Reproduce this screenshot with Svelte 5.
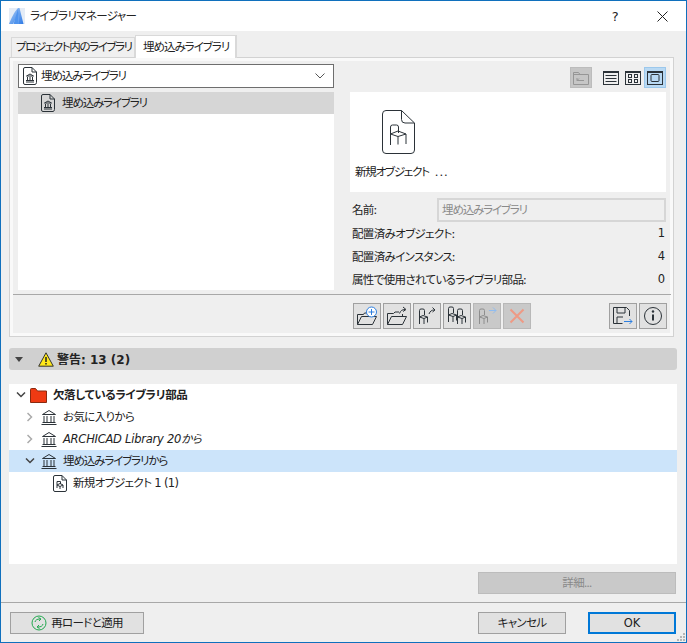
<script>
  const rows = [
    { label: '配置済みオブジェクト:', value: 1 },
    { label: '配置済みインスタンス:', value: 4 },
    { label: '属性で使用されているライブラリ部品:', value: 0 }
  ];
</script>

{#snippet bank(size = 16)}
  <svg width={size} height={size} viewBox="0 0 16 16" fill="none" stroke="#2b3238" stroke-width="1">
    <path d="M1.500 5.500 8 1.500l6.500 4zM3 7v6M6 7v6M10 7v6M13 7v6M1.500 13.500h13M0.500 15.500h15"/>
  </svg>
{/snippet}

{#snippet docBank()}
  <svg width="14" height="18" viewBox="0 0 14 18" fill="none" stroke="#2b3238" stroke-width="1">
    <path d="M2 .5h7l4.500 4.500v10.500a2 2 0 0 1-1.500 2H2a1.500 1.500 0 0 1-1.500-1.500V2A1.500 1.500 0 0 1 2 .5zM9 .5V5h4.500"/>
    <path d="M3.500 9 7 7l3.500 2zM4.500 10v3M7 10v3M9.500 10v3M3 13.500h8M3 15h8"/>
  </svg>
{/snippet}

{#snippet chair(stroke = '#2b3238', op = 1)}
  <g fill="none" stroke={stroke} stroke-width="1" opacity={op}>
    <path d="M2.500 9V2.500a1.500 1.500 0 0 1 1.500-1.500h2a1.500 1.500 0 0 1 1.500 1.500V7"/>
    <path d="M2.500 9 6 7.500 10.500 9 7 10.500zM2.500 9v7M7 10.500V16M10.500 9v5.500"/>
  </g>
{/snippet}

<div class="win">
  <header class="title">
    <svg class="logo" width="16" height="16" viewBox="0 0 16 16">
      <defs>
        <linearGradient id="lg" x1="0" x2="1" y1="0" y2="1">
          <stop offset="0" stop-color="#a9cdf7"/>
          <stop offset="1" stop-color="#2f7be6"/>
        </linearGradient>
      </defs>
      <rect width="16" height="16" fill="#e4ecf6"/>
      <path d="M0 16C2 11 5 4 9 0h1.500L14.500 16H10L9 6 4 16z" fill="url(#lg)"/>
      <path d="M9 1 4.500 16H10z" fill="#4f94ee"/>
    </svg>
    <span class="title-text">ライブラリマネージャー</span>
    <span class="help">?</span>
    <svg class="close" width="11" height="11" viewBox="0 0 11 11" stroke="#222" fill="none"><path d="M.5.5l10 10M10.500.5l-10 10"/></svg>
  </header>

  <nav class="tabs">
    <div class="tab">プロジェクト内のライブラリ</div>
    <div class="tab active">埋め込みライブラリ</div>
  </nav>

  <section class="panel">
    <div class="upper">
      <div class="left">
        <div class="select">
          {@render docBank()}
          <span class="select-text">埋め込みライブラリ</span>
          <svg class="caret" width="10" height="6" viewBox="0 0 10 6" fill="none" stroke="#555"><path d="M.5.500 5 5 9.500.500"/></svg>
        </div>
        <div class="list">
          <div class="list-row">
            {@render docBank()}
            <span>埋め込みライブラリ</span>
          </div>
        </div>
      </div>

      <div class="right">
        <div class="views">
          <span class="view up">
            <svg width="16" height="14" viewBox="0 0 16 14" fill="none" stroke="#969696">
              <path d="M.5 13.500V1.500h5l1.500 2h8.500v10zM.5 3.500H7M4 9.500h7M4 9.500 6 7.500M4 7v2.500"/>
            </svg>
          </span>
          <svg class="v-list" width="16" height="14" viewBox="0 0 16 14" fill="none" stroke="#2b3238">
            <rect x=".5" y=".5" width="15" height="13"/><path d="M.5 1.500h15" /><path d="M2.500 4.500h11M2.500 7.500h11M2.500 10.500h11"/>
          </svg>
          <svg class="v-grid" width="16" height="14" viewBox="0 0 16 14" fill="none" stroke="#2b3238">
            <rect x=".5" y=".5" width="15" height="13"/><path d="M.5 1.500h15"/>
            <rect x="3.500" y="3.500" width="3" height="3"/><rect x="9.500" y="3.500" width="3" height="3"/>
            <rect x="3.500" y="8.500" width="3" height="3"/><rect x="9.500" y="8.500" width="3" height="3"/>
          </svg>
          <span class="view on">
            <svg width="16" height="14" viewBox="0 0 16 14" fill="none" stroke="#2b3238">
              <rect x=".5" y=".5" width="15" height="13"/><path d="M.5 1.500h15"/><rect x="4" y="3.500" width="8" height="7" rx="1"/>
            </svg>
          </span>
        </div>

        <div class="preview">
          <svg width="33" height="44" viewBox="0 0 33 44" fill="none" stroke="#2b3238" stroke-width="1">
            <path d="M4 .5h15.500L32.500 13v27a3.500 3.500 0 0 1-3.500 3.500H4A3.500 3.500 0 0 1 .5 40V4A3.500 3.500 0 0 1 4 .5z"/>
            <path d="M19.500.5v9a3.500 3.500 0 0 0 3.500 3.500h9.500"/>
            <path d="M8.500 35V17a2 2 0 0 1 2-2h4a2 2 0 0 1 2 2v6"/>
            <path d="M8.500 24l7.500-3 8 3-8 2.500zM16 26.500v8M24 24v10"/>
          </svg>
          <span class="preview-label">新規オブジェクト<span class="dots">...</span></span>
        </div>

        <div class="name-row">
          <span>名前:</span>
          <div class="name-input">埋め込みライブラリ</div>
        </div>

        {#each rows as r}
          <div class="stat"><span>{r.label}</span><span class="num">{r.value}</span></div>
        {/each}
      </div>
    </div>

    <div class="toolbar">
      <button class="tool">
        <svg width="22" height="20" viewBox="0 0 22 20" fill="none" stroke="#2b3238">
          <path d="M1.500 18.500V8.500h6l1-1.500h3M1.500 18.500h15l4-8h-15l-4 8"/>
          <circle cx="15.500" cy="6" r="5" fill="#fff" stroke="#2d7fe0"/><path d="M15.500 3v6M12.500 6h6" stroke="#2d7fe0"/>
        </svg>
      </button>
      <button class="tool">
        <svg width="22" height="20" viewBox="0 0 22 20" fill="none" stroke="#2b3238">
          <path d="M1.500 18.500V7.500h6l1.500-1.500h4M16.500 10V8M1.500 18.500h15l4-8h-15l-4 8"/>
          <path d="M13.500 7.500c1-3 3-4 5.500-4M17 1l3 2.500-3 2" />
        </svg>
      </button>
      <button class="tool">
        <svg width="22" height="20" viewBox="0 0 22 20">
          <g transform="translate(1,2)">{@render chair()}</g>
          <path d="M13 8c1-3 3-4 5-4M16.500 1.500l2.500 2.500-2.500 2" fill="none" stroke="#2b3238"/>
        </svg>
      </button>
      <button class="tool">
        <svg width="24" height="20" viewBox="0 0 24 20">
          <g transform="translate(1,0)">{@render chair()}</g>
          <g transform="translate(10,2)">{@render chair()}</g>
        </svg>
      </button>
      <button class="tool off">
        <svg width="22" height="20" viewBox="0 0 22 20">
          <g transform="translate(1,2)">{@render chair('#8e8e8e')}</g>
          <path d="M13 4.500h7M17 1.500l3 3-3 3" fill="none" stroke="#8fbcf0"/>
        </svg>
      </button>
      <button class="tool off">
        <svg width="16" height="16" viewBox="0 0 16 16" fill="none" stroke="#ee9a85" stroke-width="2"><path d="M1.500 1.500l13 13M14.500 1.500l-13 13"/></svg>
      </button>
      <span class="grow"></span>
      <button class="tool">
        <svg width="22" height="20" viewBox="0 0 22 20" fill="none" stroke="#2b3238">
          <path d="M1.500 1.500h13l3 3V10M1.500 1.500v16h9"/>
          <path d="M5 1.500V7h8V1.500M5 17.500V11h6"/>
          <path d="M12 15.500h8M17.500 13l2.500 2.500-2.500 2.500" stroke="#2d7fe0"/>
        </svg>
      </button>
      <button class="tool">
        <svg width="20" height="20" viewBox="0 0 20 20" fill="none" stroke="#2b3238">
          <circle cx="10" cy="10" r="8.500"/>
          <path d="M10 8.500v6" stroke-width="2"/><circle cx="10" cy="5.500" r="1.200" fill="#2b3238" stroke="none"/>
        </svg>
      </button>
    </div>
  </section>

  <div class="warnbar">
    <svg width="8" height="5" viewBox="0 0 8 5"><path d="M0 0h8L4 5z" fill="#444"/></svg>
    <svg class="warn-ico" width="16" height="15" viewBox="0 0 16 15">
      <path d="M8 .8 15.300 14.200H.7z" fill="#ffe81a" stroke="#333"/>
      <path d="M8 5v5" stroke="#222" stroke-width="1.500"/><path d="M8 11v1.500" stroke="#222" stroke-width="1.500"/>
    </svg>
    <strong>警告: 13 (2)</strong>
  </div>

  <div class="tree">
    <div class="node l0">
      <svg class="chev" width="10" height="6" viewBox="0 0 10 6" fill="none" stroke="#444" stroke-width="1.500"><path d="M1 .5l4 4 4-4"/></svg>
      <svg class="red" width="18" height="15" viewBox="0 0 18 15">
        <path d="M.5 14.500V1.500a1 1 0 0 1 1-1h4l2 2.500h9v11.500z" fill="#ef3a13" stroke="#8a2a10"/>
      </svg>
      <strong>欠落しているライブラリ部品</strong>
    </div>
    <div class="node l1">
      <svg class="chev" width="6" height="10" viewBox="0 0 6 10" fill="none" stroke="#aaa" stroke-width="1.500"><path d="M.5 1l4 4-4 4"/></svg>
      {@render bank()}
      <span>お気に入りから</span>
    </div>
    <div class="node l1">
      <svg class="chev" width="6" height="10" viewBox="0 0 6 10" fill="none" stroke="#aaa" stroke-width="1.500"><path d="M.5 1l4 4-4 4"/></svg>
      {@render bank()}
      <em>ARCHICAD Library 20から</em>
    </div>
    <div class="node l1 hi">
      <svg class="chev down" width="10" height="6" viewBox="0 0 10 6" fill="none" stroke="#444" stroke-width="1.500"><path d="M1 .5l4 4 4-4"/></svg>
      {@render bank()}
      <span class="kana">埋め込みライブラリから</span>
    </div>
    <div class="node l2">
      <svg width="14" height="17" viewBox="0 0 14 17" fill="none" stroke="#2b3238">
        <path d="M2 .5h7l4.500 4.500v10a1.500 1.500 0 0 1-1.500 1.500H2A1.500 1.500 0 0 1 .5 15V2A1.500 1.500 0 0 1 2 .5zM9 .5V5h4.500"/>
        <path d="M4 13V6.500h3.500V9M4 10l3-1.500 3 1.500-3 1.500zM7 11.500V14M10 10v3"/>
      </svg>
      <span class="mixed">新規オブジェクト 1 (1)</span>
    </div>
  </div>

  <div class="detail-row">
    <button class="btn detail" disabled>詳細...</button>
  </div>

  <footer class="footer">
    <button class="btn reload">
      <svg width="16" height="16" viewBox="0 0 16 16" fill="none" stroke="#22a84f">
        <circle cx="8" cy="8" r="7"/>
        <path d="M4 7c.5-2 2-3 5-3M7.500 2.500 10 4 8 6M12 9c-.5 2-2 3-5 3M8.500 13.500 6 12l2-2"/>
      </svg>
      <span>再ロードと適用</span>
    </button>
    <span class="grow"></span>
    <button class="btn cancel">キャンセル</button>
    <button class="btn ok">OK</button>
    <svg class="grip" width="9" height="9" viewBox="0 0 9 9" fill="#b5b5b5">
      <rect x="6" y="0" width="2" height="2"/><rect x="3" y="3" width="2" height="2"/><rect x="6" y="3" width="2" height="2"/>
      <rect x="0" y="6" width="2" height="2"/><rect x="3" y="6" width="2" height="2"/><rect x="6" y="6" width="2" height="2"/>
    </svg>
  </footer>
</div>

<style>
  :global(body) { margin: 0; background: #efefef; }
  .win {
    position: relative;
    box-sizing: border-box;
    width: 687px; height: 643px;
    border: 1px solid #1070bd;
    background: #efefef;
    display: flex; flex-direction: column;
    font: 11.5px "Noto Sans CJK JP", "DejaVu Sans", sans-serif;
    font-feature-settings: "palt";
    letter-spacing: -0.65px;
    color: #222;
    overflow: hidden;
  }
  svg { display: block; flex: none; }
  .title {
    height: 30px; background: #fff;
    display: flex; align-items: center;
    padding: 0 18px 0 8px;
  }
  .title-text { margin-left: 5px; flex: 1; padding-bottom: 2px; }
  .help { font: 13px "DejaVu Sans", sans-serif; margin-right: 39px; }
  .tabs {
    height: 26px; display: flex; align-items: flex-end;
    padding-left: 10px;
  }
  .tab {
    width: 124px; height: 20px; line-height: 17px; padding-left: 4px; box-sizing: border-box;
    border: 1px solid #d9d9d9; border-bottom: 0;
    background: #f0f0f0; letter-spacing: -1.400px; white-space: nowrap;
  }
  .tab.active {
    width: 102px; height: 23px; line-height: 20px; background: #fff; letter-spacing: -1px;
    border-width: 1px 2px 0 1px; padding-left: 7px; margin-bottom: -1px; position: relative;
  }
  .panel {
    box-sizing: border-box;
    margin-left: 8px; width: 665px; height: 280px;
    border: 1px solid #d2d2d2;
    box-shadow: inset 0 0 0 3px #f9f9f9;
    display: flex; flex-direction: column;
    padding: 1px;
  }
  .upper {
    height: 236px; box-sizing: border-box;
    display: grid; grid-template-columns: 316px 316px; column-gap: 16px;
    padding: 5px 0 0 5px;
    border-bottom: 1.500px solid #a8a8a8;
    margin: 0 1px 0 2px;
  }
  .left, .right { display: flex; flex-direction: column; min-width: 0; }
  .select {
    box-sizing: border-box; height: 24px; background: #fff;
    border: 1px solid #6e6e6e;
    display: flex; align-items: center; padding: 0 8px 0 4px;
  }
  .select-text { margin-left: 4px; flex: 1; padding-bottom: 2px; letter-spacing: -1.150px; }
  .list { margin-top: 4px; height: 198px; background: #fff; }
  .list-row {
    height: 22px; background: #d6d6d6;
    display: flex; align-items: center; padding-left: 23px; gap: 7px;
  }
  .list-row span { padding-bottom: 2px; letter-spacing: -1.150px; }
  .views {
    height: 28px; display: flex; align-items: center;
    padding-bottom: 1px; box-sizing: border-box;
  }
  .view {
    box-sizing: border-box; width: 22px; height: 21px;
    display: flex; align-items: center; justify-content: center;
  }
  .view.up { margin-left: 220px; background: #c6c6c6; border: 1px solid #bcbcbc; }
  .v-list { margin-left: 11px; }
  .v-grid { margin-left: 6px; }
  .view.on { margin-left: 3px; background: #b9d9f3; border: 1px solid #9cc8ec; }
  .preview {
    height: 100px; background: #fff; box-sizing: border-box;
    display: flex; flex-direction: column; align-items: flex-start; padding: 18px 0 0 32px;
    position: relative;
  }
  .preview-label { margin: 9px 0 0 -27px; white-space: pre; letter-spacing: -1.200px; }
  .dots { letter-spacing: 1.500px; margin-left: 6px; }
  .name-row {
    margin-top: 6px; height: 24px; display: flex; align-items: center; padding-left: 2px;
  }
  .name-row span { width: 85px; padding-bottom: 2px; }
  .name-input {
    box-sizing: border-box; flex: 1; height: 24px; line-height: 18px;
    border: 2px solid #d6d6d6; padding-left: 3px; color: #8a8a8a; letter-spacing: -1.150px;
  }
  .stat {
    height: 23px; display: flex; justify-content: space-between; align-items: center;
    padding: 0 1px 0 2px;
  }
  .stat span { padding-bottom: 2px; }
  .num { font-family: "DejaVu Sans", sans-serif; letter-spacing: 0; }
  .toolbar {
    display: flex; gap: 2px; padding: 8px 5px 0 342px;
  }
  .grow { flex: 1; }
  .tool {
    box-sizing: border-box; width: 28px; height: 26px; padding: 0;
    background: #e1e1e1; border: 1px solid #a0a0a0;
    display: flex; align-items: center; justify-content: center;
  }
  .tool.off { background: #c9c9c9; border-color: #b8b8b8; }
  .warnbar {
    margin: 11px 9px 0 8px; height: 22px; background: #d0d0d0; border-radius: 3px;
    display: flex; align-items: center; padding-left: 6px;
    font-family: "DejaVu Sans", "Noto Sans CJK JP", sans-serif; font-size: 12px; letter-spacing: 0;
  }
  .warnbar strong { padding-bottom: 1px; }
  .warn-ico { margin: 0 3px 0 15px; }
  .tree {
    margin: 14px 9px 0 8px; height: 180px; background: #fff;
  }
  .tree em { font-family: "DejaVu Sans", "Noto Sans CJK JP", sans-serif; font-size: 11.500px; letter-spacing: -0.25px; }
  .node { height: 22px; display: flex; align-items: center; gap: 6px; }
  .node span, .node strong, .node em { padding-bottom: 2px; }
  .node strong { letter-spacing: -0.4px; }
  .node .kana { letter-spacing: -1.100px; }
  .node .mixed { font-family: "DejaVu Sans", "Noto Sans CJK JP", sans-serif; letter-spacing: -0.65px; }
  .l0 { padding-left: 7px; gap: 4px; }
  .l0 strong { margin-left: 1px; }
  .l1 { padding-left: 32px; position: relative; }
  .l1 .chev { position: absolute; left: 18px; }
  .hi { background: #cce4fa; }
  .l1 .down { left: 16px; }
  .l2 { padding-left: 44px; gap: 6px; }
  .detail-row { display: flex; justify-content: flex-end; padding: 8px 10px 0 0; }
  .btn {
    box-sizing: border-box; height: 22px; padding: 0 0 2px;
    font: inherit; font-feature-settings: inherit; letter-spacing: inherit; color: #222;
    background: #e1e1e1; border: 1px solid #a0a0a0;
  }
  .detail { width: 198px; background: #c9c9c9; border-color: #bcbcbc; color: #8a8a8a; }
  .footer {
    margin-top: 8px; border-top: 1px solid #a8a8a8;
    height: 40px; box-sizing: border-box; padding: 9px 10px 0 9px;
    display: flex; align-items: flex-start; gap: 22px; position: relative;
  }
  .reload {
    width: 134px; display: flex; align-items: center; justify-content: center; gap: 4px; padding: 0;
  }
  .reload span { padding-bottom: 2px; }
  .cancel { width: 88px; }
  .ok { width: 88px; border: 2px solid #0078d7; font-family: "DejaVu Sans", sans-serif; letter-spacing: 0; padding-bottom: 0; }
  .grip { position: absolute; right: 0; bottom: 0; }
</style>
